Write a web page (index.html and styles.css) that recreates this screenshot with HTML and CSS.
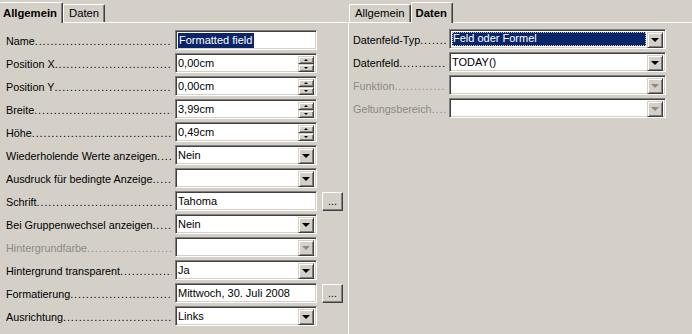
FILE: index.html
```html
<!DOCTYPE html>
<html lang="de">
<head>
    <meta charset="UTF-8">
    <title>Eigenschaften</title>
    <link rel="stylesheet" href="styles.css">
</head>
<body>
    <div class="screens">
        <!-- Allgemein page -->
        <div class="pane left">
            <div class="tabs">
                <div class="tab active">Allgemein</div>
                <div class="tab">Daten</div>
            </div>
            <div class="page">
                <div class="row">
                    <span class="lbl">Name</span>
                    <div class="field"><span class="sel">Formatted field</span></div>
                </div>
                <div class="row">
                    <span class="lbl">Position X</span>
                    <div class="field">0,00cm<span class="spin"><i class="up"></i><i class="down"></i></span></div>
                </div>
                <div class="row">
                    <span class="lbl">Position Y</span>
                    <div class="field">0,00cm<span class="spin"><i class="up"></i><i class="down"></i></span></div>
                </div>
                <div class="row">
                    <span class="lbl">Breite</span>
                    <div class="field">3,99cm<span class="spin"><i class="up"></i><i class="down"></i></span></div>
                </div>
                <div class="row">
                    <span class="lbl">Höhe</span>
                    <div class="field">0,49cm<span class="spin"><i class="up"></i><i class="down"></i></span></div>
                </div>
                <div class="row">
                    <span class="lbl">Wiederholende Werte anzeigen</span>
                    <div class="field">Nein<span class="drop"></span></div>
                </div>
                <div class="row">
                    <span class="lbl">Ausdruck für bedingte Anzeige</span>
                    <div class="field"><span class="drop"></span></div>
                </div>
                <div class="row">
                    <span class="lbl">Schrift</span>
                    <div class="field">Tahoma</div>
                    <span class="more">...</span>
                </div>
                <div class="row">
                    <span class="lbl">Bei Gruppenwechsel anzeigen</span>
                    <div class="field">Nein<span class="drop"></span></div>
                </div>
                <div class="row off">
                    <span class="lbl">Hintergrundfarbe</span>
                    <div class="field"><span class="drop"></span></div>
                </div>
                <div class="row">
                    <span class="lbl">Hintergrund transparent</span>
                    <div class="field">Ja<span class="drop"></span></div>
                </div>
                <div class="row">
                    <span class="lbl">Formatierung</span>
                    <div class="field">Mittwoch, 30. Juli 2008</div>
                    <span class="more">...</span>
                </div>
                <div class="row">
                    <span class="lbl">Ausrichtung</span>
                    <div class="field">Links<span class="drop"></span></div>
                </div>
            </div>
        </div>

        <!-- Daten page -->
        <div class="pane right">
            <div class="tabs">
                <div class="tab">Allgemein</div>
                <div class="tab active">Daten</div>
            </div>
            <div class="page">
                <div class="row">
                    <span class="lbl">Datenfeld-Typ</span>
                    <div class="field focus"><span class="hl">Feld oder Formel</span><span class="drop"></span></div>
                </div>
                <div class="row">
                    <span class="lbl">Datenfeld</span>
                    <div class="field">TODAY()<span class="drop"></span></div>
                </div>
                <div class="row off">
                    <span class="lbl">Funktion</span>
                    <div class="field"><span class="drop"></span></div>
                </div>
                <div class="row off">
                    <span class="lbl">Geltungsbereich</span>
                    <div class="field"><span class="drop"></span></div>
                </div>
            </div>
        </div>
    </div>
</body>
</html>
```

FILE: styles.css
```css
body {
    margin: 0;
    background: #d4d0c8;
    font-family: Tahoma, "Liberation Sans", Arial, sans-serif;
    font-size: 11px;
    color: #000;
}

.screens {
    display: flex;
    height: 334px;
    overflow: hidden;
}

.pane {
    display: flex;
    flex-direction: column;
}
.pane.left {
    width: 347px;
}
.pane.right {
    flex: 1;
}

/* tabs */
.tabs {
    display: flex;
    align-items: flex-end;
    height: 22px;
    position: relative;
    z-index: 1;
}
.right .tabs {
    padding-left: 2px;
}
.tab {
    height: 17px;
    line-height: 17px;
    padding: 0 5px 0 5px;
    border-top: 1px solid #fff;
    border-left: 1px solid #fff;
    border-right: 1px solid #404040;
    box-shadow: inset -1px 0 0 #808080;
    border-radius: 2px 2px 0 0;
    font-size: 11.3px;
}
.tab.active {
    height: 20px;
    line-height: 20px;
    margin-bottom: -1px;
    background: #d4d0c8;
    font-weight: bold;
    padding: 0 5px 0 4px;
}
.left .tab.active {
    border-left: none;
    padding-left: 3px;
}

.page {
    flex: 1;
    border-top: 1px solid #fff;
    padding-top: 7px;
}
.left .page {
    padding-left: 6px;
}
.right .page {
    border-left: 1px solid #fff;
    margin-left: 1px;
    padding-left: 4px;
    padding-top: 6px;
}

/* rows */
.row {
    display: flex;
    align-items: center;
    height: 20px;
    margin-bottom: 3px;
}
.lbl {
    white-space: nowrap;
    overflow: hidden;
    font-size: 10.8px;
    margin-right: 3px;
    padding-top: 1px;
}
.lbl::after {
    content: "....................................................................";
    letter-spacing: 0.9px;
}
.left .lbl {
    width: 166px;
}
.right .lbl {
    width: 93px;
}
.row.off .lbl {
    color: #8c8a85;
}

.field {
    position: relative;
    box-sizing: border-box;
    height: 20px;
    width: 142px;
    background: #fff;
    border-top: 1px solid #808080;
    border-left: 1px solid #808080;
    border-right: 1px solid #fff;
    border-bottom: 1px solid #fff;
    box-shadow: inset 1px 1px 0 #404040, inset -1px -1px 0 #d4d0c8;
    padding: 1px 0 0 2px;
    line-height: 16px;
    font-size: 11px;
    white-space: nowrap;
}
.right .field {
    width: 217px;
}

.sel {
    background: #0a246a;
    color: #fff;
    padding: 0 2px 0 1px;
    display: inline-block;
    line-height: 15px;
}

.field.focus {
    padding: 2px 19px 2px 2px;
}
.hl {
    display: block;
    height: 14px;
    line-height: 13px;
    background: #0a246a;
    color: #fff;
    outline: 1px dotted #c9c7b8;
    outline-offset: -1px;
    padding-left: 1px;
}

/* spin and drop buttons */
.spin, .drop {
    position: absolute;
    top: 2px;
    right: 2px;
    width: 16px;
    height: 16px;
}
.spin {
    display: flex;
    flex-direction: column;
}
.spin i, .drop {
    box-sizing: border-box;
    background: #d4d0c8;
    border-top: 1px solid #d4d0c8;
    border-left: 1px solid #d4d0c8;
    border-right: 1px solid #404040;
    border-bottom: 1px solid #404040;
    box-shadow: inset 1px 1px 0 #fff, inset -1px -1px 0 #808080;
}
.spin i {
    position: relative;
    height: 8px;
}
.spin i::after {
    content: "";
    position: absolute;
    left: 5px;
    border-left: 2px solid transparent;
    border-right: 2px solid transparent;
}
.spin .up::after {
    top: 2px;
    border-bottom: 2px solid #000;
}
.spin .down::after {
    top: 2px;
    border-top: 2px solid #000;
}
.drop::after {
    content: "";
    position: absolute;
    left: 3px;
    top: 5px;
    border-left: 4px solid transparent;
    border-right: 4px solid transparent;
    border-top: 4px solid #000;
}
.row.off .drop::after {
    border-top-color: #8c8a85;
}

.more {
    box-sizing: border-box;
    width: 21px;
    height: 19px;
    margin-left: 5px;
    text-align: center;
    line-height: 17px;
    background: #d4d0c8;
    border-top: 1px solid #fff;
    border-left: 1px solid #fff;
    border-right: 1px solid #404040;
    border-bottom: 1px solid #404040;
    box-shadow: inset -1px -1px 0 #808080;
    font-size: 11px;
}
```
